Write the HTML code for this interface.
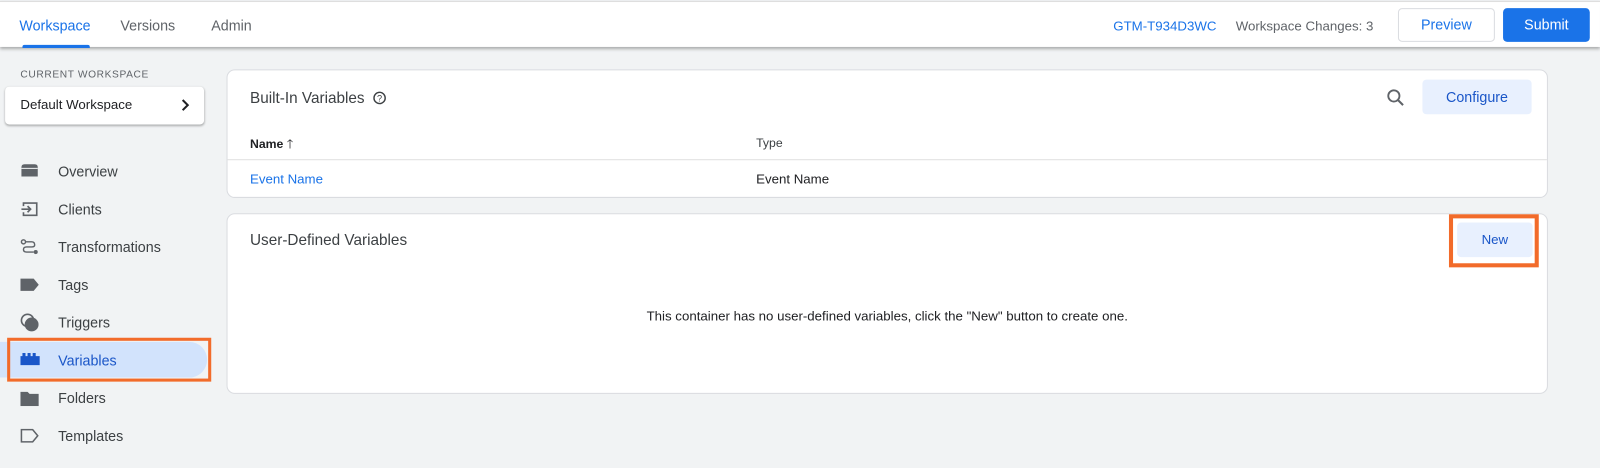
<!DOCTYPE html>
<html><head><style>
*{box-sizing:border-box;margin:0;padding:0}
html,body{width:1600px;height:468px;background:#f1f3f4;overflow:hidden}
body{font-family:"Liberation Sans",Arial,sans-serif;color:#202124}
#w{position:absolute;left:0;top:0;width:1568px;height:459px;transform:scale(1.0204);transform-origin:0 0}
.hdr{position:absolute;left:0;top:1px;width:1568px;height:45px;background:#fff;box-shadow:0 2px 3px rgba(0,0,0,.3);border-top:1px solid #ddd}
.tab{position:absolute;top:15px;font-size:14px;color:#5f6368}
.a{position:absolute;font-size:13px}
.card{position:absolute;left:222px;width:1295px;background:#fff;border:1px solid #dadce0;border-radius:8px}
.nav{position:absolute;left:57px;font-size:14px;color:#3c4043}
.ic{position:absolute;left:20px}
</style></head><body><div id="w">
<div class="hdr">
<div class="tab" style="left:19px;color:#1a73e8">Workspace</div>
<div style="position:absolute;left:22px;top:42px;width:66px;height:3px;background:#1a73e8;border-radius:2px 2px 0 0"></div>
<div class="tab" style="left:118px">Versions</div>
<div class="tab" style="left:207px">Admin</div>
<div class="a" style="left:1091px;top:16px;color:#1a73e8">GTM-T934D3WC</div>
<div class="a" style="left:1211px;top:16px;color:#5f6368">Workspace Changes: 3</div>
<div style="position:absolute;left:1370px;top:6px;width:95px;height:33px;border:1px solid #dadce0;border-radius:4px;color:#1a73e8;font-size:14px;text-align:center;line-height:31px">Preview</div>
<div style="position:absolute;left:1473px;top:6px;width:85px;height:33px;background:#1a73e8;border-radius:4px;color:#fff;font-size:14px;text-align:center;line-height:33px">Submit</div>
</div>
<div style="position:absolute;left:20px;top:68px;font-size:10px;letter-spacing:.6px;color:#5f6368">CURRENT WORKSPACE</div>
<div style="position:absolute;left:5px;top:85px;width:195px;height:37px;background:#fff;border-radius:4px;box-shadow:0 1px 2px rgba(0,0,0,.3);font-size:13px;padding:10px 0 0 15px">Default Workspace<svg style="position:absolute;right:13px;top:12px" width="10" height="12" viewBox="0 0 10 12"><path d="M2 1l5 5-5 5" stroke="#202124" stroke-width="2" fill="none"/></svg></div>
<div style="position:absolute;left:0;top:335px;width:203px;height:35px;background:#d2e3fc;border-radius:0 18px 18px 0"></div>
<div style="position:absolute;left:7px;top:331px;width:200px;height:43px;border:3px solid #f26b2a"></div>
<svg class="ic" style="top:160px" width="18" height="14"><path d="M1 4Q1 1 4 1H14Q17 1 17 4V13H1Z" fill="#5f6368"/><path d="M1 5H17" stroke="#f1f3f4"/></svg>
<div class="nav" style="top:160px">Overview</div>
<svg class="ic" style="top:197px" width="18" height="16"><path d="M3 5V2H16V14H3V11M1 8H10M7 5l3 3-3 3" stroke="#5f6368" stroke-width="1.6" fill="none"/></svg>
<div class="nav" style="top:197px">Clients</div>
<svg class="ic" style="top:234px" width="18" height="16"><circle cx="3" cy="3" r="2" stroke="#5f6368" fill="none" stroke-width="1.4"/><circle cx="15" cy="13" r="2" fill="#5f6368"/><path d="M5 3H11Q14 3 14 6Q14 8 11 8H6Q3 8 3 10.5Q3 13 6 13H13" stroke="#5f6368" stroke-width="1.4" fill="none"/></svg>
<div class="nav" style="top:234px">Transformations</div>
<svg class="ic" style="top:272px" width="18" height="14"><path d="M0 1H13L18 7L13 13H0Z" fill="#5f6368"/></svg>
<div class="nav" style="top:271px">Tags</div>
<svg class="ic" style="top:307px" width="18" height="18"><circle cx="7" cy="7" r="6" stroke="#5f6368" stroke-width="1.6" fill="none"/><circle cx="11" cy="11" r="6" stroke="#5f6368" stroke-width="1.6" fill="#5f6368"/></svg>
<div class="nav" style="top:308px">Triggers</div>
<svg class="ic" style="top:346px" width="19" height="12"><path d="M0 3H2V0H5V3H7V0H10V3H12V0H15V3H19V12H0Z" fill="#1a56c8"/></svg>
<div class="nav" style="top:345px;color:#1a56c8">Variables</div>
<svg class="ic" style="top:383px" width="18" height="15"><path d="M0 1H7L9 3H18V15H0Z" fill="#5f6368"/></svg>
<div class="nav" style="top:382px">Folders</div>
<svg class="ic" style="top:420px" width="18" height="14"><path d="M1 1H12L17 7L12 13H1Z" stroke="#5f6368" stroke-width="1.5" fill="none"/></svg>
<div class="nav" style="top:419px">Templates</div>

<div class="card" style="top:68px;height:126px">
<div style="position:absolute;left:22px;top:19px;font-size:15px;color:#3c4043">Built-In Variables</div>
<svg style="position:absolute;left:142px;top:20px" width="14" height="14"><circle cx="7" cy="7" r="5.5" stroke="#3c4043" stroke-width="1.4" fill="none"/><text x="7" y="10.5" font-size="9" text-anchor="middle" fill="#3c4043" font-family="Liberation Sans">?</text></svg>
<svg style="position:absolute;left:1135px;top:17px" width="20" height="20"><circle cx="8" cy="8" r="5.5" stroke="#5f6368" stroke-width="1.8" fill="none"/><path d="M12 12l5 5" stroke="#5f6368" stroke-width="2"/></svg>
<div style="position:absolute;left:1171px;top:9px;width:107px;height:34px;background:#e8f0fe;border-radius:4px;color:#1a56c8;font-size:14px;text-align:center;line-height:34px">Configure</div>
<div style="position:absolute;left:22px;top:63px;font-size:12px;font-weight:bold;color:#202124">Name <span style="font-weight:normal">🡑</span></div>
<div style="position:absolute;left:518px;top:64px;font-size:12px;color:#3c4043">Type</div>
<div style="position:absolute;left:0;top:87px;width:100%;border-top:1px solid #e0e0e0"></div>
<div style="position:absolute;left:22px;top:99px;font-size:13px;color:#1a73e8">Event Name</div>
<div style="position:absolute;left:518px;top:99px;font-size:13px">Event Name</div>
</div>

<div class="card" style="top:209px;height:177px">
<div style="position:absolute;left:22px;top:17px;font-size:15px;color:#3c4043">User-Defined Variables</div>
<div style="position:absolute;left:1197px;top:0px;width:88px;height:52px;border:4px solid #f26b2a"></div>
<div style="position:absolute;left:1205px;top:8px;width:74px;height:34px;background:#e8f0fe;border-radius:4px;color:#1a56c8;font-size:13px;text-align:center;line-height:34px">New</div>
<div style="position:absolute;left:0;width:100%;top:92px;text-align:center;font-size:13px">This container has no user-defined variables, click the "New" button to create one.</div>
</div>
</div></body></html>
